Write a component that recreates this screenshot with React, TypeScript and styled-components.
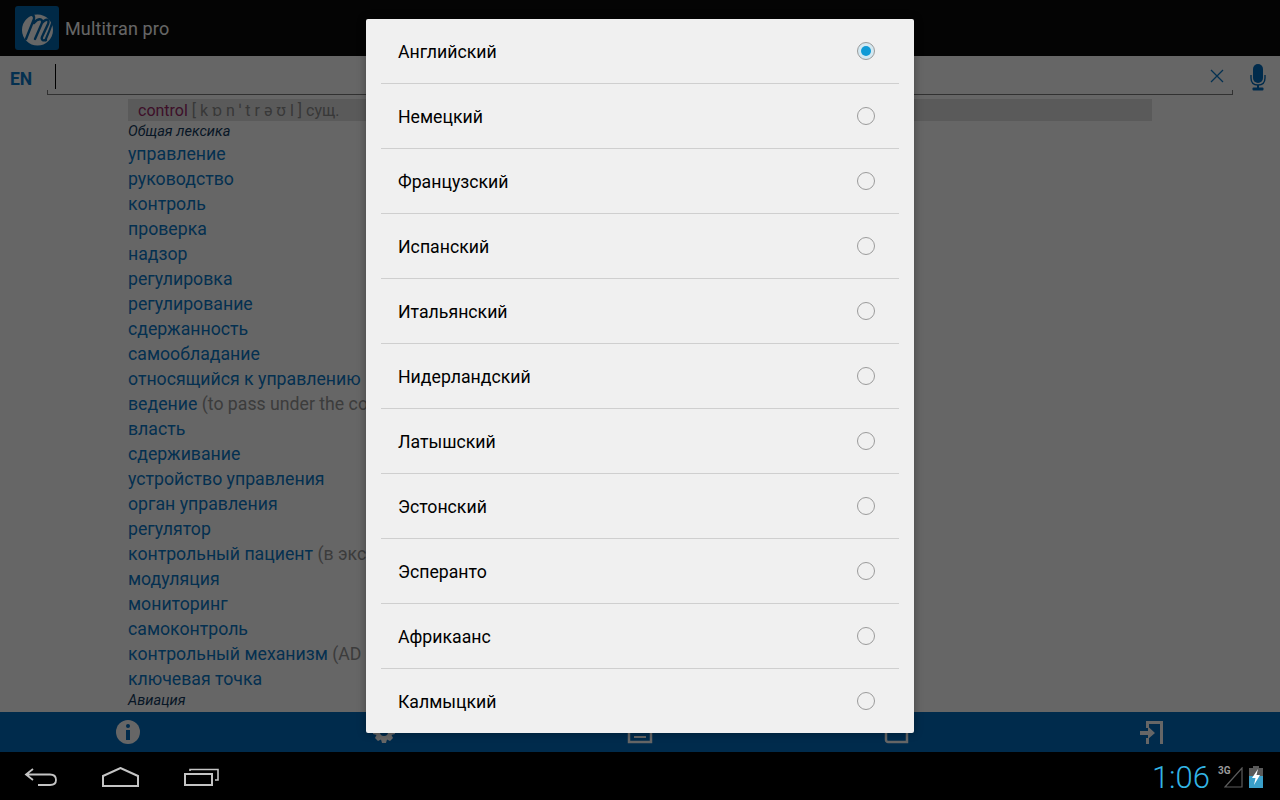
import styled, { createGlobalStyle } from "styled-components";

const GlobalStyle = createGlobalStyle`
  html, body {
    margin: 0;
    padding: 0;
    background: #000;
  }
  * {
    box-sizing: border-box;
  }
`;

const Screen = styled.div`
  width: 1280px;
  height: 800px;
  display: flex;
  flex-direction: column;
  overflow: hidden;
  font-family: Roboto, "Noto Sans", sans-serif;
`;
const AppArea = styled.div`
  position: relative;
  height: 752px;
  display: flex;
  flex-direction: column;
  background: #ffffff;
`;
const ActionBar = styled.div`
  height: 56px;
  flex: none;
  display: flex;
  align-items: center;
  gap: 6px;
  padding-left: 15px;
  background: #0c0c0c;
`;
const AppTitle = styled.span`
  font-size: 18px;
  letter-spacing: 0.15px;
  color: #ffffff;
`;
const SearchRow = styled.div`
  height: 40px;
  flex: none;
  display: flex;
  align-items: flex-start;
`;
const LangLabel = styled.span`
  width: 47px;
  flex: none;
  padding: 13px 0 0 10px;
  font-size: 17.5px;
  line-height: 20px;
  font-weight: 700;
  color: #0a78c8;
`;
const SearchField = styled.div`
  position: relative;
  width: 1186px;
  height: 39px;
  flex: none;
  border-bottom: 1px solid #7a7a7a;
  display: flex;
  justify-content: flex-end;
  padding: 13px 9px 0 0;
  &::before,
  &::after {
    content: "";
    position: absolute;
    bottom: 0;
    width: 1px;
    height: 4px;
    background: #7a7a7a;
  }
  &::before {
    left: 0;
  }
  &::after {
    right: 0;
  }
`;
const Caret = styled.div`
  position: absolute;
  left: 8px;
  top: 8px;
  width: 1px;
  height: 25px;
  background: #000;
`;
const MicButton = styled.div`
  flex: 1;
  display: flex;
  justify-content: center;
  padding: 8px 0 0 3px;
`;
const Content = styled.div`
  flex: 1;
  min-height: 0;
  overflow: hidden;
  padding: 3px 128px 0;
`;
const TermBar = styled.div`
  height: 22px;
  display: flex;
  align-items: center;
  padding-left: 10px;
  gap: 4px;
  font-size: 16px;
  white-space: pre;
  color: #8c8c8c;
  background: #e1e1e1;
`;
const Term = styled.span`
  color: #9a2a68;
`;
const Category = styled.div<{ $height: number }>`
  height: ${(p) => p.$height}px;
  line-height: ${(p) => p.$height}px;
  font-size: 14.6px;
  font-style: italic;
  color: #12395c;
`;
const Row = styled.div`
  height: 25px;
  line-height: 25px;
  font-size: 17.7px;
  white-space: nowrap;
  color: #0a78c8;
`;
const Note = styled.span`
  color: #969696;
`;
const Footer = styled.div`
  height: 40px;
  flex: none;
  display: grid;
  grid-template-columns: repeat(5, 1fr);
  background: #006bbd;
`;
const FooterItem = styled.div`
  display: flex;
  align-items: center;
  justify-content: center;
`;
const Scrim = styled.div`
  position: absolute;
  inset: 0;
  background: rgba(0, 0, 0, 0.6);
`;
const Dialog = styled.div`
  position: absolute;
  left: 366px;
  top: 19px;
  width: 548px;
  height: 714px;
  overflow: hidden;
  border-radius: 2px;
  padding: 0 15px;
  background: #f0f0f0;
  box-shadow: 0 0 8px rgba(0, 0, 0, 0.35);
`;
const Option = styled.div<{ $last?: boolean }>`
  height: 65px;
  display: flex;
  align-items: center;
  justify-content: space-between;
  padding: 2px 24px 0 17px;
  font-size: 17.7px;
  color: #000;
  border-bottom: 1px solid ${(p) => (p.$last ? "transparent" : "#cfcfcf")};
`;
const Radio = styled.span<{ $checked?: boolean }>`
  width: 18px;
  height: 18px;
  flex: none;
  margin-bottom: 3px;
  display: flex;
  align-items: center;
  justify-content: center;
  border-radius: 50%;
  border: 1px solid #9b9b9b;
  background: ${(p) => (p.$checked ? "#d3e8f1" : "transparent")};
  &::after {
    content: "";
    display: ${(p) => (p.$checked ? "block" : "none")};
    width: 10px;
    height: 10px;
    border-radius: 50%;
    background: #0f9ad6;
  }
`;
const NavBar = styled.div`
  height: 48px;
  flex: none;
  display: flex;
  align-items: center;
  background: #000;
  padding: 2px 17px 0 24px;
`;
const NavButtons = styled.div`
  display: flex;
  align-items: center;
  gap: 45px;
`;
const Status = styled.div`
  margin-left: auto;
  display: flex;
  align-items: center;
`;
const Clock = styled.span`
  font-size: 31px;
  font-weight: 300;
  color: #33b5e5;
  margin-right: 8px;
`;
const SignalBox = styled.div`
  position: relative;
  width: 25px;
  height: 22px;
  margin-right: 6px;
`;
const NetworkLabel = styled.span`
  position: absolute;
  left: 0;
  top: 0;
  font-size: 10px;
  line-height: 10px;
  font-weight: 700;
  color: #9a9a9a;
`;

const Logo = () => (
  <svg width="44" height="44" viewBox="0 0 44 44">
    <rect width="44" height="44" rx="3" fill="#0068b0" />
    <circle cx="22.5" cy="24" r="15.5" fill="#ffffff" />
    <path
      d="M9 10 C14 7 20 8 19 13 L11 33 M19 17 C23 12 28 12 27 17 L20 33 M27 17 C31 12 35 13 33 18 L27 31 C26 34 28 35 31 34"
      fill="none"
      stroke="#0068b0"
      strokeWidth="2.4"
      strokeLinecap="round"
    />
    <path d="M39 8 C38 18 33 28 30 35" fill="none" stroke="#0068b0" strokeWidth="2.2" />
  </svg>
);

const ClearIcon = () => (
  <svg width="14" height="14" viewBox="0 0 14 14">
    <path d="M1 1 L13 13 M13 1 L1 13" stroke="#0a78c8" strokeWidth="1.3" fill="none" />
  </svg>
);

const MicIcon = () => (
  <svg width="16" height="27" viewBox="0 0 16 27">
    <rect x="3" y="0" width="10" height="19" rx="5" fill="#006bbd" />
    <path d="M1 11 V14 C1 19 4 21 8 21 C12 21 15 19 15 14 V11" fill="none" stroke="#006bbd" strokeWidth="1.4" />
    <rect x="7" y="21" width="2" height="3" fill="#006bbd" />
    <rect x="2.5" y="23.5" width="11" height="3" rx="1" fill="#006bbd" />
  </svg>
);

const InfoIcon = () => (
  <svg width="26" height="26" viewBox="0 0 26 26">
    <circle cx="13" cy="13" r="12" fill="#ffffff" />
    <rect x="11" y="5" width="4" height="4" rx="2" fill="#006bbd" />
    <rect x="11" y="11" width="4" height="10" fill="#006bbd" />
  </svg>
);

const GearIcon = () => (
  <svg width="26" height="26" viewBox="0 0 26 26">
    <path
      d="M11 2 H15 L16 5.5 L19 4 L22 7 L20.5 10 L24 11 V15 L20.5 16 L22 19 L19 22 L16 20.5 L15 24 H11 L10 20.5 L7 22 L4 19 L5.5 16 L2 15 V11 L5.5 10 L4 7 L7 4 L10 5.5 Z"
      fill="#ffffff"
    />
    <circle cx="13" cy="13" r="4" fill="#006bbd" />
  </svg>
);

const ListIcon = () => (
  <svg width="26" height="26" viewBox="0 0 26 26">
    <rect x="2" y="3" width="22" height="20" fill="none" stroke="#ffffff" strokeWidth="2.5" />
    <path d="M7 13 H19 M7 18 H19" stroke="#ffffff" strokeWidth="2" />
  </svg>
);

const PageIcon = () => (
  <svg width="26" height="26" viewBox="0 0 26 26">
    <path d="M3 3 V21 C3 22 4 23 5 23 H24 V3 Z" fill="none" stroke="#ffffff" strokeWidth="2.5" />
  </svg>
);

const ExitIcon = () => (
  <svg width="24" height="24" viewBox="0 0 24 24">
    <path d="M6 8 V1 H23 V24 H20 V4 H9 V8 Z M6 18 H9 V24 H6 Z" fill="#ffffff" />
    <path d="M0 11 H8 V6.5 L15 13 L8 19 V15 H0 Z" fill="#ffffff" />
  </svg>
);

const BackIcon = () => (
  <svg width="33" height="20" viewBox="0 0 33 20">
    <path
      d="M9 2 L2 7.5 L9 13 M2 7.5 H26 C30 7.5 32 10 32 13 C32 16 30 18 26 18 H14"
      fill="none"
      stroke="#c4c4c4"
      strokeWidth="1.8"
    />
  </svg>
);

const HomeIcon = () => (
  <svg width="37" height="20" viewBox="0 0 37 20">
    <path d="M1 9 L18.5 1 L36 9 V19 H1 Z" fill="none" stroke="#c4c4c4" strokeWidth="2" />
  </svg>
);

const RecentIcon = () => (
  <svg width="35" height="18" viewBox="0 0 35 18">
    <rect x="1" y="6" width="27" height="11" fill="none" stroke="#c4c4c4" strokeWidth="2" />
    <path d="M6 3 V1.5 H34 V12 H31" fill="none" stroke="#c4c4c4" strokeWidth="1.6" />
  </svg>
);

const SignalIcon = () => (
  <svg width="19" height="21" viewBox="0 0 19 21" style={{ position: "absolute", right: 0, bottom: 0 }}>
    <path d="M1 20 L18 1 V20 Z" fill="none" stroke="#5c5c5c" strokeWidth="1.2" />
  </svg>
);

const BatteryIcon = () => (
  <svg width="14" height="22" viewBox="0 0 14 22">
    <rect x="4" y="0" width="6" height="2" fill="#5a5a5a" />
    <rect x="0" y="2" width="14" height="9" fill="#5a5a5a" />
    <rect x="0" y="10" width="14" height="12" fill="#3a9fc9" />
    <path d="M9 3 L3 12 H6.5 L5 19 L11 9 H7.5 Z" fill="#ffffff" />
  </svg>
);

const translations: { text: string; note?: string }[] = [
  { text: "управление" },
  { text: "руководство" },
  { text: "контроль" },
  { text: "проверка" },
  { text: "надзор" },
  { text: "регулировка" },
  { text: "регулирование" },
  { text: "сдержанность" },
  { text: "самообладание" },
  { text: "относящийся к управлению" },
  { text: "ведение", note: " (to pass under the co" },
  { text: "власть" },
  { text: "сдерживание" },
  { text: "устройство управления" },
  { text: "орган управления" },
  { text: "регулятор" },
  { text: "контрольный пациент", note: " (в экс" },
  { text: "модуляция" },
  { text: "мониторинг" },
  { text: "самоконтроль" },
  { text: "контрольный механизм", note: " (AD" },
  { text: "ключевая точка" },
];

const languages = [
  "Английский",
  "Немецкий",
  "Французский",
  "Испанский",
  "Итальянский",
  "Нидерландский",
  "Латышский",
  "Эстонский",
  "Эсперанто",
  "Африкаанс",
  "Калмыцкий",
];

export default function App() {
  return (
    <Screen>
      <GlobalStyle />
      <AppArea>
        <ActionBar>
          <Logo />
          <AppTitle>Multitran pro</AppTitle>
        </ActionBar>
        <SearchRow>
          <LangLabel>EN</LangLabel>
          <SearchField>
            <Caret />
            <ClearIcon />
          </SearchField>
          <MicButton>
            <MicIcon />
          </MicButton>
        </SearchRow>
        <Content>
          <TermBar>
            <Term>control</Term>
            <span>[ k ɒ n ˈ t r ə ʊ l ] сущ.</span>
          </TermBar>
          <Category $height={21}>Общая лексика</Category>
          {translations.map((t) => (
            <Row key={t.text}>
              {t.text}
              {t.note && <Note>{t.note}</Note>}
            </Row>
          ))}
          <Category $height={16}>Авиация</Category>
        </Content>
        <Footer>
          <FooterItem>
            <InfoIcon />
          </FooterItem>
          <FooterItem>
            <GearIcon />
          </FooterItem>
          <FooterItem>
            <ListIcon />
          </FooterItem>
          <FooterItem>
            <PageIcon />
          </FooterItem>
          <FooterItem>
            <ExitIcon />
          </FooterItem>
        </Footer>
        <Scrim />
        <Dialog>
          {languages.map((lang, i) => (
            <Option key={lang} $last={i === languages.length - 1}>
              {lang}
              <Radio $checked={i === 0} />
            </Option>
          ))}
        </Dialog>
      </AppArea>
      <NavBar>
        <NavButtons>
          <BackIcon />
          <HomeIcon />
          <RecentIcon />
        </NavButtons>
        <Status>
          <Clock>1:06</Clock>
          <SignalBox>
            <NetworkLabel>3G</NetworkLabel>
            <SignalIcon />
          </SignalBox>
          <BatteryIcon />
        </Status>
      </NavBar>
    </Screen>
  );
}
